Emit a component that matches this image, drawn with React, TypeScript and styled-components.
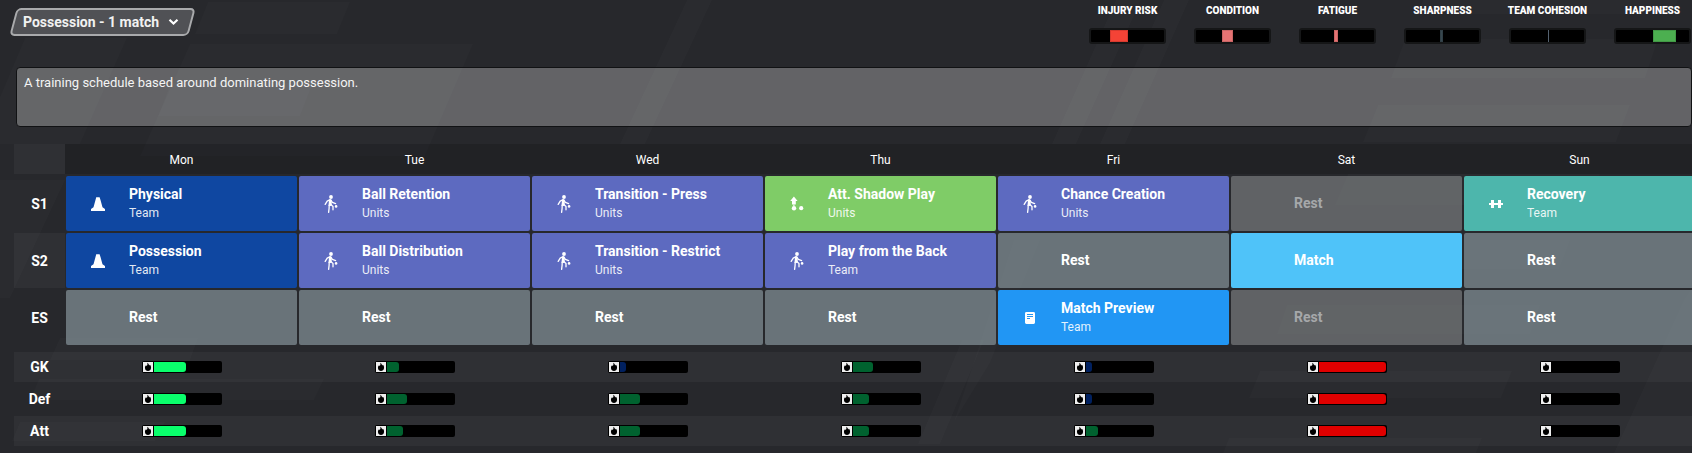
import React from "react";
import styled, { createGlobalStyle } from "styled-components";

const GlobalStyle = createGlobalStyle`
  *, *::before, *::after { box-sizing: border-box; }
  body {
    margin: 0;
    background: #27282c;
    color: #fff;
    font-family: Roboto, "Liberation Sans", sans-serif;
    overflow-x: hidden;
  }
`;

const Page = styled.main`
  position: relative;
  isolation: isolate;
  min-height: 100vh;
  padding-bottom: 6px;
  overflow: hidden;
`;

const BackdropSvg = styled.svg`
  position: absolute;
  inset: 0;
  z-index: -1;
  width: 100%;
  height: 100%;
  fill: #fff;
  fill-opacity: 0.014;
`;

const TopBar = styled.header`
  display: flex;
  justify-content: space-between;
  align-items: flex-start;
  height: 67px;
  padding: 0 1px 0 13px;
`;

const SelectShell = styled.div`
  position: relative;
  isolation: isolate;
  display: flex;
  align-items: center;
  width: 179px;
  height: 28px;
  margin-top: 8px;

  &::before {
    content: "";
    position: absolute;
    inset: 0;
    z-index: -1;
    border: 2px solid #a9aaac;
    border-radius: 5px;
    background: #505155;
    transform: skewX(-15deg);
  }

  svg {
    position: absolute;
    right: 13px;
    pointer-events: none;
  }
`;

const Select = styled.select`
  appearance: none;
  width: 100%;
  height: 28px;
  padding: 0 32px 0 10px;
  border: 0;
  outline: 0;
  background: transparent;
  color: #f1f1f1;
  font: 700 14px/28px Roboto, "Liberation Sans", sans-serif;

  option {
    color: #fff;
    background: #505155;
  }
`;

const MeterList = styled.div`
  display: flex;
  gap: 28px;
  padding-top: 5px;
`;

const MeterItem = styled.div`
  display: flex;
  flex-direction: column;
  align-items: center;
  gap: 11px;
  width: 77px;
`;

const MeterLabel = styled.span`
  font-size: 10px;
  font-weight: 900;
  line-height: 12px;
  white-space: nowrap;
`;

const MeterTrack = styled.div`
  width: 100%;
  height: 16px;
  border: 2px solid #151617;
  border-radius: 3px;
  background: #000;
`;

const MeterFill = styled.div<{ $color: string }>`
  height: 100%;
  min-width: 1px;
  background: ${(p) => p.$color};
  box-shadow: inset 0 0 0 1px rgba(0, 0, 0, 0.12);
`;

const Description = styled.textarea`
  display: block;
  width: calc(100% - 16px);
  height: 60px;
  margin: 0 0 17px 16px;
  padding: 6px 7px;
  resize: none;
  outline: 0;
  border: 1px solid #111214;
  border-radius: 4px;
  background: rgba(255, 255, 255, 0.28);
  color: #f4f4f4;
  font: 400 13px/18px Roboto, "Liberation Sans", sans-serif;
`;

const Schedule = styled.table`
  display: block;
  margin: 0 -4px 0 14px;
`;

const HeadGroup = styled.thead`
  display: block;
`;

const BodyGroup = styled.tbody`
  display: flex;
  flex-direction: column;
  gap: 2px;
  margin-top: 2px;

  & + & {
    margin-top: 7px;
  }
`;

const Row = styled.tr<{ $striped?: boolean }>`
  display: grid;
  grid-template-columns: 51px repeat(7, minmax(0, 1fr));
  background: ${(p) => (p.$striped ? "rgba(255, 255, 255, 0.04)" : "transparent")};
`;

const Corner = styled.td`
  padding: 0;
  background: rgba(255, 255, 255, 0.04);
`;

const DayHead = styled.th`
  padding: 2px 0 0;
  background: rgba(0, 0, 0, 0.15);
  font-size: 12px;
  font-weight: 400;
  line-height: 28px;
  text-align: center;
`;

const RowHead = styled.th<{ $shaded?: boolean }>`
  display: flex;
  align-items: center;
  justify-content: center;
  padding: 0;
  font-size: 14px;
  font-weight: 700;
  background: ${(p) => (p.$shaded ? "rgba(255, 255, 255, 0.04)" : "transparent")};
`;

type Tone = "navy" | "indigo" | "green" | "teal" | "sky" | "blue" | "rest" | "off";

const toneColor: Record<Tone, string> = {
  navy: "#0f47a1",
  indigo: "#5d6ac0",
  green: "#7fcc67",
  teal: "#4db6ac",
  sky: "#4fc3f9",
  blue: "#2196f4",
  rest: "rgba(144, 160, 167, 0.63)",
  off: "rgba(158, 162, 164, 0.48)",
};

const TileCell = styled.td`
  padding: 0 1px;
`;

const Tile = styled.div<{ $tone: Tone }>`
  display: grid;
  grid-template-columns: 63px minmax(0, 1fr);
  align-items: center;
  height: 55px;
  border-radius: 2px;
  background: ${(p) => toneColor[p.$tone]};
  color: ${(p) => (p.$tone === "off" ? "#a6a8aa" : "#fff")};
`;

const TileIcon = styled.span`
  display: flex;
  justify-content: center;
  svg {
    fill: currentColor;
  }
`;

const TileText = styled.div<{ $paired: boolean }>`
  padding: ${(p) => (p.$paired ? "1px 0 0" : "0 0 2px")};
`;

const TileTitle = styled.div`
  font-size: 14px;
  font-weight: 700;
  line-height: 18px;
`;

const TileGroup = styled.div`
  font-size: 12px;
  line-height: 20px;
  opacity: 0.88;
`;

const LoadCell = styled.td`
  display: flex;
  align-items: center;
  justify-content: center;
  height: 30px;
  padding: 0;
`;

const LoadBar = styled.div`
  display: flex;
  gap: 1px;
  width: 80px;
  height: 12px;
  padding: 1px;
  border-radius: 2px;
  background: #000;
`;

const FlameBox = styled.span`
  flex: none;
  width: 10px;
  height: 10px;
  background: #eeeeee;
  svg {
    display: block;
  }
`;

const LoadTrack = styled.div`
  flex: 1;
`;

const LoadFill = styled.div<{ $color: string }>`
  height: 10px;
  border-radius: 0 3px 3px 0;
  background: ${(p) => p.$color};
`;

type IconName = "cone" | "runner" | "shadow" | "dumbbell" | "note";

function Icon({ name }: { name: IconName }) {
  switch (name) {
    case "cone":
      return (
        <svg width="14" height="14" viewBox="0 0 14 14" aria-hidden="true">
          <path d="M5.2 0.2h3.4l0.9 2.8 1.1 4 0.9 3.2 2.5 1.8v2H0V12l2.5-1.8 0.900-3.200L4.500 3z" />
        </svg>
      );
    case "runner":
      return (
        <svg width="14" height="18" viewBox="0 0 14 18" aria-hidden="true">
          <circle cx="7" cy="2" r="1.9" />
          <path
            d="M6.2 4.7L3.2 6.2 1.2 9.4M6.8 5l1.6 2.4 3.2 1.2M5.2 10.3l-0.1 3-0.5 4M6.8 9.6l2.2 1.8 0 3.4"
            fill="none"
            stroke="currentColor"
            strokeWidth="1.3"
            strokeLinecap="round"
            strokeLinejoin="round"
          />
          <path d="M5.2 4.6l2.4 0.1 0.2 5.6-1.2 0.8-2.2-0.4z" />
          <circle cx="12.1" cy="11.4" r="1.3" />
        </svg>
      );
    case "shadow":
      return (
        <svg width="14" height="15" viewBox="0 0 14 15" aria-hidden="true">
          <path d="M3.9 0.4L7.6 5H5.8v3.600H2V5H0.200z" />
          <circle cx="3.9" cy="9.3" r="0.8" />
          <circle cx="4" cy="12.2" r="2.200" />
          <circle cx="11.2" cy="12.2" r="2.100" />
        </svg>
      );
    case "dumbbell":
      return (
        <svg width="14" height="8" viewBox="0 0 14 8" aria-hidden="true">
          <path d="M2 0h3v3h4V0h3v3h2v2h-2v3H9V5H5v3H2V5H0V3h2z" />
        </svg>
      );
    case "note":
      return (
        <svg width="10" height="12" viewBox="0 0 10 12" aria-hidden="true">
          <path
            fillRule="evenodd"
            d="M1.4 0h7.2A1.4 1.4 0 0110 1.4v9.2A1.4 1.4 0 018.6 12H1.4A1.4 1.4 0 010 10.6V1.4A1.4 1.4 0 011.4 0zM2 2v1h6V2zM2 4v1h6V4zM2 6v1h3V6z"
          />
        </svg>
      );
  }
}

function Flame() {
  return (
    <svg width="10" height="10" viewBox="0 0 10 10" aria-hidden="true">
      <path d="M4.2 0.8C5.4 1.5 6 2.4 6.1 3.5L6.9 2.8C8 4 8.2 5 8 6.2 7.7 8 6.6 9 5 9S2.2 8 2 6.3C1.9 5 2.2 4.2 3 3.3L3.7 4.1C4.5 3.2 4.7 2 4.2 0.8z" />
    </svg>
  );
}

const shards = [
  "208,2 350,2 337,34 195,34",
  "190,44 473,44 425,156 140,156",
  "171,83 313,83 300,116 158,116",
  "25,38 127,38 80,144 -20,144",
  "0,180 65,180 10,298 0,298",
  "687,0 712,0 645,144 620,144",
  "1116,0 1141,0 1076,144 1052,144",
  "1164,0 1189,0 1125,144 1100,144",
  "1423,0 1678,0 1672,14 1417,14",
  "1405,39 1658,39 1645,78 1391,78",
  "1378,105 1630,105 1616,142 1363,142",
  "1348,174 1600,174 1590,205 1335,205",
  "1330,240 1570,240 1559,269 1320,269",
  "1287,305 1540,305 1530,334 1277,334",
  "1260,371 1512,371 1501,398 1249,398",
  "1229,438 1482,438 1476,453 1223,453",
  "60,338 198,338 190,360 50,360",
  "39,379 324,379 314,400 30,400",
  "20,422 165,422 155,441 12,441",
  "962,340 984,340 940,444 918,444",
  "1014,240 1040,240 990,363 954,422",
  "1692,288 1692,453 1614,453 1684,300",
];

function Backdrop() {
  return (
    <BackdropSvg viewBox="0 0 1692 453" preserveAspectRatio="xMinYMin slice" aria-hidden="true">
      {shards.map((points) => (
        <polygon key={points} points={points} />
      ))}
    </BackdropSvg>
  );
}

const meters = [
  { label: "INJURY RISK", start: 26, size: 25, color: "#f44336" },
  { label: "CONDITION", start: 36, size: 15, color: "#e57373" },
  { label: "FATIGUE", start: 45, size: 6, color: "#e57373" },
  { label: "SHARPNESS", start: 47, size: 4, color: "#37474f" },
  { label: "TEAM COHESION", start: 51, size: 1, color: "#607080" },
  { label: "HAPPINESS", start: 51, size: 31, color: "#4caf50" },
];

const days = ["Mon", "Tue", "Wed", "Thu", "Fri", "Sat", "Sun"];

interface Session {
  title: string;
  tone: Tone;
  group?: string;
  icon?: IconName;
}

const rest: Session = { title: "Rest", tone: "rest" };
const dayOff: Session = { title: "Rest", tone: "off" };

const unit = (title: string, group = "Units"): Session => ({
  title,
  group,
  tone: "indigo",
  icon: "runner",
});

const sessions: { slot: string; items: Session[] }[] = [
  {
    slot: "S1",
    items: [
      { title: "Physical", group: "Team", tone: "navy", icon: "cone" },
      unit("Ball Retention"),
      unit("Transition - Press"),
      { title: "Att. Shadow Play", group: "Units", tone: "green", icon: "shadow" },
      unit("Chance Creation"),
      dayOff,
      { title: "Recovery", group: "Team", tone: "teal", icon: "dumbbell" },
    ],
  },
  {
    slot: "S2",
    items: [
      { title: "Possession", group: "Team", tone: "navy", icon: "cone" },
      unit("Ball Distribution"),
      unit("Transition - Restrict"),
      unit("Play from the Back", "Team"),
      rest,
      { title: "Match", tone: "sky" },
      rest,
    ],
  },
  {
    slot: "ES",
    items: [
      rest,
      rest,
      rest,
      rest,
      { title: "Match Preview", group: "Team", tone: "blue", icon: "note" },
      dayOff,
      rest,
    ],
  },
];

const loads = [
  { unit: "GK", values: [49, 19, 9, 30, 9, 100, 0] },
  { unit: "Def", values: [49, 30, 30, 24, 9, 100, 0] },
  { unit: "Att", values: [49, 24, 30, 24, 19, 100, 0] },
];

function loadColor(value: number) {
  if (value > 80) return "#e10000";
  if (value > 40) return "#0aff6c";
  if (value > 10) return "#00622f";
  return "#00205f";
}

export default function App() {
  return (
    <Page>
      <GlobalStyle />
      <Backdrop />
      <TopBar>
        <SelectShell>
          <Select aria-label="Training schedule" defaultValue="possession-1">
            <option value="possession-1">Possession - 1 match</option>
          </Select>
          <svg width="11" height="8" viewBox="0 0 11 8" aria-hidden="true">
            <path d="M1.5 1.8L5.5 5.6 9.5 1.8" fill="none" stroke="#fff" strokeWidth="2.2" />
          </svg>
        </SelectShell>
        <MeterList>
          {meters.map((m) => (
            <MeterItem key={m.label}>
              <MeterLabel>{m.label}</MeterLabel>
              <MeterTrack>
                <MeterFill
                  $color={m.color}
                  style={{ marginLeft: `${m.start}%`, width: `${m.size}%` }}
                />
              </MeterTrack>
            </MeterItem>
          ))}
        </MeterList>
      </TopBar>
      <Description
        aria-label="Schedule description"
        readOnly
        value="A training schedule based around dominating possession."
      />
      <Schedule>
        <HeadGroup>
          <Row>
            <Corner />
            {days.map((day) => (
              <DayHead key={day} scope="col">
                {day}
              </DayHead>
            ))}
          </Row>
        </HeadGroup>
        <BodyGroup>
          {sessions.map(({ slot, items }) => (
            <Row key={slot}>
              <RowHead scope="row" $shaded={slot === "S2"}>
                {slot}
              </RowHead>
              {items.map((item, i) => (
                <TileCell key={days[i]}>
                  <Tile $tone={item.tone}>
                    <TileIcon>{item.icon && <Icon name={item.icon} />}</TileIcon>
                    <TileText $paired={Boolean(item.group)}>
                      <TileTitle>{item.title}</TileTitle>
                      {item.group && <TileGroup>{item.group}</TileGroup>}
                    </TileText>
                  </Tile>
                </TileCell>
              ))}
            </Row>
          ))}
        </BodyGroup>
        <BodyGroup>
          {loads.map(({ unit: name, values }, row) => (
            <Row key={name} $striped={row % 2 === 0}>
              <RowHead scope="row">{name}</RowHead>
              {values.map((value, i) => (
                <LoadCell key={days[i]}>
                  <LoadBar>
                    <FlameBox>
                      <Flame />
                    </FlameBox>
                    <LoadTrack>
                      <LoadFill $color={loadColor(value)} style={{ width: `${value}%` }} />
                    </LoadTrack>
                  </LoadBar>
                </LoadCell>
              ))}
            </Row>
          ))}
        </BodyGroup>
      </Schedule>
    </Page>
  );
}
